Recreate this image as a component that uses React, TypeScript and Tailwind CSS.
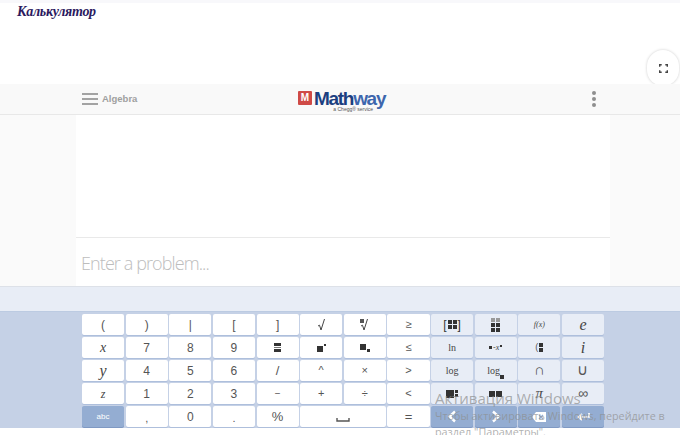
import React from "react";

const Sq = ({ s = 4, className = "" }: { s?: number; className?: string }) => (
  <span className={`inline-block bg-[#333] ${className}`} style={{ width: s, height: s }} />
);

const Mono = ({ children, className = "" }: { children: React.ReactNode; className?: string }) => (
  <span className={`font-['Liberation_Serif',serif] text-[#444] ${className}`}>{children}</span>
);

const Grid2 = () => (
  <span className="grid grid-cols-2 gap-px">
    <Sq s={4} /><Sq s={4} /><Sq s={4} /><Sq s={4} />
  </span>
);

type K = { c: React.ReactNode; kind?: "w" | "l" | "d"; span?: boolean };

const sans = (t: string, cls = "text-[12px]") => <span className={`text-[#555] ${cls}`}>{t}</span>;
const it = (t: string, cls = "text-[14px]") => <Mono className={`italic ${cls}`}>{t}</Mono>;
const se = (t: string, cls = "text-[10px]") => <Mono className={cls}>{t}</Mono>;

const Root = ({ small }: { small?: boolean }) => (
  <span className="relative flex h-[14px] w-[9px] items-center justify-center">
    <svg width="9" height="13" viewBox="0 0 9 13" fill="none" stroke="#444" strokeWidth="1">
      <path d="M1 8l1.500-.8L4 12 7.500 1" />
    </svg>
    {small && <span className="absolute left-[0px] top-[1px] h-[4px] w-[4px] bg-[#555]" />}
  </span>
);

const rows: K[][] = [
  [
    { c: sans("(") }, { c: sans(")") }, { c: sans("|") }, { c: sans("[") }, { c: sans("]") },
    { c: <Root /> }, { c: <Root small /> }, { c: sans("≥", "text-[11px]") },
    { kind: "l", c: <span className="flex items-center gap-px text-[12px] text-[#333]">[<Grid2 />]</span> },
    {
      kind: "l",
      c: (
        <span className="flex flex-col items-center gap-px">
          <span className="flex gap-px"><Sq s={4} className="h-[2px] bg-[#999]" /><Sq s={4} className="h-[2px] bg-[#999]" /></span>
          <Grid2 />
        </span>
      ),
    },
    { kind: "l", c: <Mono className="italic text-[8px]">f(x)</Mono> },
    { kind: "l", c: it("e", "text-[16px]") },
  ],
  [
    { c: it("x") }, { c: sans("7") }, { c: sans("8") }, { c: sans("9") },
    { c: <span className="flex flex-col gap-px"><span className="block h-[3px] w-[7px] bg-[#333]" /><span className="block h-px w-[7px] bg-[#777]" /><span className="block h-[3px] w-[7px] bg-[#333]" /></span> },
    { c: <span className="flex items-start gap-px"><Sq s={6} className="mt-[2px]" /><Sq s={2} /></span> },
    { c: <span className="flex items-end gap-px"><Sq s={6} className="mb-[2px]" /><Sq s={3} /></span> },
    { c: sans("≤", "text-[11px]") },
    { kind: "l", c: se("ln", "text-[10px]") },
    { kind: "l", c: <span className="flex items-center gap-px"><Sq s={3} /><Mono className="italic text-[8px]">-x</Mono><Sq s={2} className="-mt-1" /></span> },
    { kind: "l", c: <span className="flex items-center gap-px text-[9px] text-[#555]">(<span className="flex flex-col gap-px"><Sq s={4} /><Sq s={4} /></span></span> },
    { kind: "l", c: it("i", "text-[16px]") },
  ],
  [
    { c: it("y", "text-[16px]") }, { c: sans("4") }, { c: sans("5") }, { c: sans("6") },
    { c: sans("/", "text-[13px]") }, { c: sans("^", "text-[11px]") }, { c: sans("×", "text-[11px]") }, { c: sans(">", "text-[11px]") },
    { kind: "l", c: se("log", "text-[10px]") },
    { kind: "l", c: <span className="flex items-end"><Mono className="text-[10px] leading-[12px]">log</Mono><Sq s={4} className="mb-[-2px]" /></span> },
    { kind: "l", c: sans("∩", "text-[15px]") },
    { kind: "l", c: sans("∪", "text-[15px]") },
  ],
  [
    { c: it("z", "text-[12px]") }, { c: sans("1") }, { c: sans("2") }, { c: sans("3") },
    { c: sans("−", "text-[10px]") }, { c: sans("+", "text-[11px]") }, { c: sans("÷", "text-[11px]") }, { c: sans("<", "text-[11px]") },
    { kind: "l", c: <span className="flex items-center gap-px"><Sq s={8} /><span className="flex flex-col gap-px"><Sq s={3} /><Sq s={3} /></span></span> },
    { kind: "l", c: <span className="flex gap-px"><Sq s={6} /><Sq s={6} /></span> },
    { kind: "l", c: it("π", "text-[15px]") },
    { kind: "l", c: sans("∞", "text-[14px]") },
  ],
  [
    { kind: "d", c: <span className="text-[8px] text-white">abc</span> },
    { c: <span className="mt-[4px] text-[11px] text-[#555]">,</span> }, { c: sans("0") }, { c: <span className="mt-[4px] text-[11px] text-[#555]">.</span> }, { c: sans("%", "text-[13px]") },
    { span: true, c: <svg width="14" height="6" viewBox="0 0 14 6" className="mt-[6px]"><path d="M1 1v3h12V1" fill="none" stroke="#555" strokeWidth="1.4" /></svg> },
    { c: sans("=", "text-[13px]") },
    { kind: "d", c: <svg width="10" height="13" viewBox="0 0 10 13"><path d="M8 1.500 2.500 6.500 8 11.500" fill="none" stroke="#fff" strokeWidth="2.4" /></svg> },
    { kind: "d", c: <svg width="10" height="13" viewBox="0 0 10 13"><path d="M2 1.500 7.500 6.500 2 11.500" fill="none" stroke="#fff" strokeWidth="2.4" /></svg> },
    { kind: "d", c: <svg width="14" height="10" viewBox="0 0 14 10"><path d="M4 0h10v10H4L0 5z" fill="#fff" /><path d="M7 3l4 4M11 3l-4 4" stroke="#94add2" strokeWidth="1.300" /></svg> },
    { kind: "d", c: <svg width="14" height="10" viewBox="0 0 14 10"><path d="M13 1v4H3M6 2 2.500 5 6 8" fill="none" stroke="#fff" strokeWidth="1.700" /></svg> },
  ],
];

const Key = ({ k }: { k: K }) => {
  const tone =
    k.kind === "d"
      ? "bg-[#94add2] shadow-[0_1px_0_#7f99c3]"
      : k.kind === "l"
      ? "bg-[#e8edf6] shadow-[0_1px_0_#aebfdc]"
      : "bg-white shadow-[0_1px_0_#aebfdc]";
  return (
    <div className={`flex h-[21px] items-center justify-center rounded-[2px] ${tone} ${k.span ? "col-span-2" : ""}`}>
      {k.c}
    </div>
  );
};

export default function App() {
  return (
    <div className="relative flex h-[435px] w-[680px] flex-col overflow-hidden bg-white font-['Liberation_Sans',sans-serif]">
      <div className="h-[3px] shrink-0 bg-[#f8f8fb]" />
      <div className="relative h-[81px] shrink-0 bg-white pl-[17px]">
        <span className="block font-['Liberation_Serif',serif] text-[14px] leading-[18px] font-bold italic tracking-[-0.3px] text-[#2b1a5e]">Калькулятор</span>
        <div className="absolute right-[1px] top-[47px] flex h-[36px] w-[32px] items-center justify-center rounded-full bg-white shadow-[0_0_3px_rgba(0,0,0,0.2)]">
          <svg width="9" height="9" viewBox="0 0 10 10" fill="none" stroke="#444" strokeWidth="1.600"><path d="M.75 3V.75H3M7 .75h2.250V3M9.250 7v2.250H7M3 9.250H.75V7" /></svg>
        </div>
      </div>

      <header className="relative flex h-[31px] shrink-0 items-center justify-between border-b border-[#e8e8e8] bg-[#f9f9f9] pl-[82px] pr-[84px]">
        <div className="flex items-center gap-[4px]">
          <span className="flex w-[16px] flex-col gap-[3px]">
            <span className="h-[2px] bg-[#a3a3a3]" /><span className="h-[2px] bg-[#a3a3a3]" /><span className="h-[2px] bg-[#a3a3a3]" />
          </span>
          <span className="text-[9.5px] font-bold text-[#a0a0a0]">Algebra</span>
        </div>
        <div className="absolute left-[298px] top-[5px] flex items-start gap-[2px]">
          <span className="mt-[2px] flex h-[14px] w-[14px] items-center justify-center rounded-[1px] bg-[#cf4a46] text-[10px] font-bold leading-none text-white">M</span>
          <div className="flex flex-col items-end">
            <span className="text-[19px] leading-[19px] font-bold tracking-[-1.3px] text-[#1c3f80]">Math<span className="text-[#3d66ad]">way</span></span>
            <span className="mt-[-2px] pr-[12px] text-[5px] leading-[6px] text-[#555]">a Chegg® service</span>
          </div>
        </div>
        <span className="flex flex-col gap-[2px]">
          <span className="h-[4px] w-[4px] rounded-full bg-[#8f8f8f]" /><span className="h-[4px] w-[4px] rounded-full bg-[#8f8f8f]" /><span className="h-[4px] w-[4px] rounded-full bg-[#8f8f8f]" />
        </span>
      </header>

      <div className="h-[171px] shrink-0 bg-[#fafafa] pl-[76px]">
        <div className="flex h-full w-[534px] flex-col bg-white">
          <div className="h-[123px] border-b border-[#e9e9e9]" />
          <div className="flex flex-1 items-center pl-[5px] pt-[2px] font-['Open_Sans',sans-serif] text-[18px] font-light tracking-[-0.9px] text-[#bdbdbd]">Enter a problem...</div>
        </div>
      </div>

      <div className="h-[25px] shrink-0 border-t border-[#dde1e8] bg-[#e8edf6]" />

      <div className="h-[117px] shrink-0 border-t border-[#bccbe2] bg-[#c5d1e6] pt-[2px]">
        <div className="ml-[82px] grid w-[522px] grid-cols-12 gap-x-[1.5px] gap-y-[2px]">
          {rows.flat().map((k, i) => <Key key={i} k={k} />)}
        </div>
      </div>
      <div className="flex-1 bg-white" />

      <div className="pointer-events-none absolute left-[435px] top-[388px] z-20 h-[47px] overflow-hidden whitespace-nowrap font-['Open_Sans',sans-serif] text-[#8d8d8d]/70">
        <div className="text-[15px] leading-[20px]">Активация Windows</div>
        <div className="text-[10.8px] leading-[15px]">Чтобы активировать Windows, перейдите в</div>
        <div className="text-[10.8px] leading-[18px]">раздел "Параметры".</div>
      </div>
    </div>
  );
}
